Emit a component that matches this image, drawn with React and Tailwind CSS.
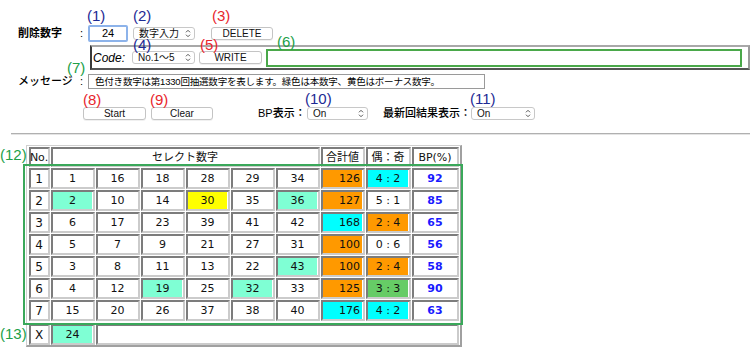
import React from "react";

const cellBase =
  "border-2 border-t-[#7c7c7c] border-l-[#7c7c7c] border-r-[#cbcbcb] border-b-[#cbcbcb] bg-white";

const AQ = "bg-[#7fffd4]";
const YE = "bg-[#ffff00]";
const OR = "bg-[#ff9900]";
const CY = "bg-[#00ffff]";
const GR = "bg-[#66cc66]";

const rows = [
  { n: "1", nums: [[1], [16], [18], [28], [29], [34]], sum: 126, sumC: OR, eo: "4 : 2", eoC: CY, bp: 92 },
  { n: "2", nums: [[2, AQ], [10], [14], [30, YE], [35], [36, AQ]], sum: 127, sumC: OR, eo: "5 : 1", eoC: "", bp: 85 },
  { n: "3", nums: [[6], [17], [23], [39], [41], [42]], sum: 168, sumC: CY, eo: "2 : 4", eoC: OR, bp: 65 },
  { n: "4", nums: [[5], [7], [9], [21], [27], [31]], sum: 100, sumC: OR, eo: "0 : 6", eoC: "", bp: 56 },
  { n: "5", nums: [[3], [8], [11], [13], [22], [43, AQ]], sum: 100, sumC: OR, eo: "2 : 4", eoC: OR, bp: 58 },
  { n: "6", nums: [[4], [12], [19, AQ], [25], [32, AQ], [33]], sum: 125, sumC: OR, eo: "3 : 3", eoC: GR, bp: 90 },
  { n: "7", nums: [[15], [20], [26], [37], [38], [40]], sum: 176, sumC: CY, eo: "4 : 2", eoC: CY, bp: 63 },
];

function Btn({ className = "", children }) {
  return (
    <div
      className={`h-[13px] bg-white border border-[#c4c4c4] rounded-[3px] flex items-center justify-center text-[10px] leading-none text-[#111] shadow-[0_1px_0_rgba(0,0,0,0.06)] ${className}`}
    >
      {children}
    </div>
  );
}

function Sel({ className = "", label }) {
  return (
    <div
      className={`h-[13px] bg-white border border-[#c8c8c8] rounded-[3px] flex items-center justify-between pl-[5px] pr-[3px] text-[10px] leading-none text-[#111] ${className}`}
    >
      <span>{label}</span>
      <svg width="6" height="9" viewBox="0 0 6 9">
        <path d="M1 3.3 L3 1.3 L5 3.3 M1 5.7 L3 7.7 L5 5.7" fill="none" stroke="#555" strokeWidth="1" />
      </svg>
    </div>
  );
}

function Cell({ children, fill = "", align = "center", className = "" }) {
  return (
    <div className={`${cellBase} ${className}`}>
      <div
        className={`h-full mr-px flex items-center ${align === "right" ? "justify-end pr-[2px]" : "justify-center"} ${fill}`}
      >
        {children}
      </div>
    </div>
  );
}

export default function App() {
  return (
    <div className="relative w-[750px] h-[355px] overflow-hidden bg-white text-black font-[family-name:'Liberation_Sans','Noto_Sans_CJK_JP',sans-serif]">
      <div className="pt-[25px]">
        {/* row 1 */}
        <div className="flex items-center h-[17px] pl-[18px]">
          <span className="w-[62px] text-[11px] font-bold leading-none">削除数字</span>
          <span className="w-[8px] text-[11px] leading-none">:</span>
          <div className="w-[40px] h-[17px] border-2 border-[#8db3ea] rounded-[2px] flex items-center justify-center text-[11px] leading-none">
            24
          </div>
          <Sel className="ml-[5px] w-[62px]" label="数字入力" />
          <Btn className="ml-[16px] w-[62px]">DELETE</Btn>
        </div>

        {/* row 2: fieldset */}
        <div className="mt-[3px] ml-[90px] w-[660px] h-[25px] flex items-center border-2 border-t-[#a8a8a8] border-l-[#3a3a3a] border-b-[#555555] border-r-[#9a9a9a] pl-px">
          <span className="w-[39px] italic text-[12px] leading-none">Code:</span>
          <Sel className="w-[63px]" label="No.1〜5" />
          <Btn className="ml-[4px] w-[63px]">WRITE</Btn>
          <div className="ml-[4px] w-[476px] h-[18px] border-2 border-[#4aa84a]" />
        </div>

        {/* row 3: message */}
        <div className="mt-[4px] flex items-center h-[15px] pl-[18px]">
          <span className="w-[62px] text-[11px] font-medium leading-none">メッセージ</span>
          <span className="w-[8px] text-[11px] leading-none">:</span>
          <div className="w-[397px] h-[15px] border border-[#9a9a9a] text-[9.5px] tracking-[-0.2px] leading-none pl-[6px] flex items-center whitespace-nowrap">
            色付き数字は第1330回抽選数字を表します。緑色は本数字、黄色はボーナス数字。
          </div>
        </div>

        {/* row 4 */}
        <div className="mt-[18px] flex items-center h-[13px] pl-[83px]">
          <Btn className="w-[63px]">Start</Btn>
          <Btn className="ml-[5px] w-[62px]">Clear</Btn>
          <span className="ml-[45px] w-[49px] text-[11px] leading-none font-medium">BP表示：</span>
          <Sel className="w-[61px]" label="On" />
          <span className="ml-[15px] w-[88px] text-[11px] leading-none font-medium">最新回結果表示：</span>
          <Sel className="w-[64px]" label="On" />
        </div>

        {/* hr */}
        <div className="mt-[13px] ml-[11px] h-[2px] border-t border-t-[#b0b0b0] border-b border-b-[#e4e4e4]" />

        {/* table */}
        <div className="mt-[10px] ml-[26px] w-[436px] border-t border-l border-t-[#d0d0d0] border-l-[#d0d0d0] border-r-2 border-b-2 border-r-[#a0a0a0] border-b-[#a0a0a0] pt-px pl-[2px] pr-px font-[family-name:'DejaVu_Sans','Noto_Sans_CJK_JP',sans-serif] text-[11px] leading-none text-[#111]">
          <div className="grid grid-cols-[21px_repeat(6,44px)_44px_45px_47px] grid-rows-[20px_repeat(7,21px)_23px] gap-px">
            <Cell>No.</Cell>
            <Cell className="col-span-6">セレクト数字</Cell>
            <Cell>合計値</Cell>
            <Cell>偶：奇</Cell>
            <Cell>BP(%)</Cell>
            {rows.map((r) => (
              <React.Fragment key={r.n}>
                <Cell className="text-[12px]">{r.n}</Cell>
                {r.nums.map(([v, c], i) => (
                  <Cell key={i} fill={c || ""}>
                    {v}
                  </Cell>
                ))}
                <Cell fill={r.sumC} align="right">
                  {r.sum}
                </Cell>
                <Cell fill={r.eoC}>{r.eo}</Cell>
                <Cell>
                  <span className="font-bold text-[#1a1aff]">{r.bp}</span>
                </Cell>
              </React.Fragment>
            ))}
            <Cell className="mt-[2px] text-[12px]">X</Cell>
            <Cell className="mt-[2px]" fill={AQ}>
              24
            </Cell>
            <Cell className="mt-[2px] col-span-8"> </Cell>
          </div>
        </div>
      </div>

      {/* green highlight box */}
      <div className="absolute left-[23px] top-[164px] w-[440px] h-[161px] border-2 border-[#3aa85a]" />

      {/* annotations */}
      <span className="absolute left-[87px] top-[8px] text-[15px] leading-none text-[#1d2a94]">(1)</span>
      <span className="absolute left-[133px] top-[8px] text-[15px] leading-none text-[#1d2a94]">(2)</span>
      <span className="absolute left-[212px] top-[8px] text-[15px] leading-none text-[#e8262c]">(3)</span>
      <span className="absolute left-[133px] top-[37px] text-[15px] leading-none text-[#1d2a94]">(4)</span>
      <span className="absolute left-[200px] top-[37px] text-[15px] leading-none text-[#e8262c]">(5)</span>
      <span className="absolute left-[277px] top-[34px] text-[15px] leading-none text-[#21a047]">(6)</span>
      <span className="absolute left-[67px] top-[60px] text-[15px] leading-none text-[#21a047]">(7)</span>
      <span className="absolute left-[83px] top-[92px] text-[15px] leading-none text-[#e8262c]">(8)</span>
      <span className="absolute left-[150px] top-[92px] text-[15px] leading-none text-[#e8262c]">(9)</span>
      <span className="absolute left-[305px] top-[91px] text-[15px] leading-none text-[#1d2a94]">(10)</span>
      <span className="absolute left-[470px] top-[91px] text-[15px] leading-none text-[#1d2a94]">(11)</span>
      <span className="absolute left-0 top-[147px] text-[15px] leading-none text-[#21a047]">(12)</span>
      <span className="absolute left-0 top-[326px] text-[15px] leading-none text-[#21a047]">(13)</span>
    </div>
  );
}
